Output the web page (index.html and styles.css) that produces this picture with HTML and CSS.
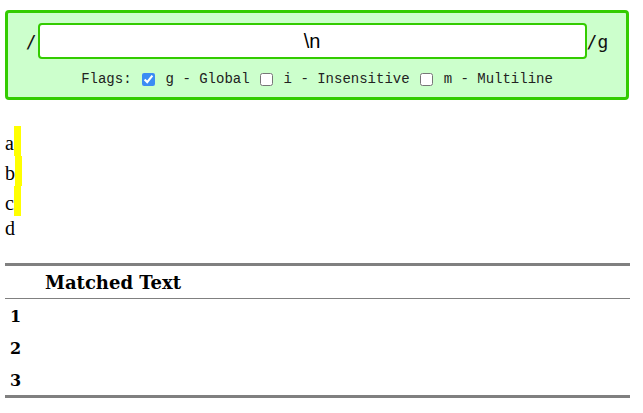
FILE: index.html
```html
<!DOCTYPE html>
<html>
<head>
<meta charset="utf-8">
<link rel="stylesheet" href="styles.css">
</head>
<body>
<div class="page">
  <div class="regex-box">
    <div class="pattern-row">
      <span class="delim delim-left">/</span>
      <input class="pattern" type="text" value="\n">
      <span class="delim delim-right">/g</span>
    </div>
    <div class="flags">
      <span class="flags-label">Flags:</span>
      <label class="flag"><input class="flag-box" type="checkbox" checked><span>g - Global</span></label>
      <label class="flag"><input class="flag-box" type="checkbox"><span>i - Insensitive</span></label>
      <label class="flag"><input class="flag-box" type="checkbox"><span>m - Multiline</span></label>
    </div>
  </div>

  <div class="test-text">
    <div class="line">a<mark class="nl"></mark></div>
    <div class="line">b<mark class="nl"></mark></div>
    <div class="line">c<mark class="nl"></mark></div>
    <div class="line">d</div>
  </div>

  <table class="matches">
    <thead>
      <tr><th class="idx-col"></th><th>Matched Text</th></tr>
    </thead>
    <tbody>
      <tr><td class="idx">1</td><td></td></tr>
      <tr><td class="idx">2</td><td></td></tr>
      <tr><td class="idx">3</td><td></td></tr>
    </tbody>
  </table>
</div>
</body>
</html>
```

FILE: styles.css
```css
html, body {
  margin: 0;
  padding: 0;
  background: #ffffff;
}

.page {
  width: 625px;
  padding: 10px 0 0 5px;
}

.regex-box {
  width: 624px;
  box-sizing: border-box;
  border: 3px solid #33cc00;
  border-radius: 4px;
  background: #ccffcc;
  padding: 10px 0 8px 0;
}

.pattern-row {
  display: flex;
  align-items: center;
  justify-content: center;
  height: 36px;
}

.delim {
  font-family: "DejaVu Sans Mono", monospace;
  font-size: 18px;
  color: #111;
}

.delim-left {
  margin-right: 1px;
}

.pattern {
  width: 549px;
  height: 36px;
  box-sizing: border-box;
  margin: 0;
  border: 2px solid #33cc00;
  border-radius: 4px;
  background: #ffffff;
  text-align: center;
  font-family: "Liberation Sans", Arial, sans-serif;
  font-size: 20px;
  color: #000;
  outline: none;
  padding: 0 4px;
}

.flags {
  display: flex;
  align-items: center;
  justify-content: center;
  height: 20px;
  margin-top: 10px;
  font-family: "Liberation Mono", "Courier New", monospace;
  font-size: 14px;
  color: #222;
}

.flag {
  display: flex;
  align-items: center;
}

.flag-box {
  width: 13px;
  height: 13px;
  margin: 0 11px 0 10px;
  accent-color: #3b8cf4;
}

.test-text {
  margin-top: 26px;
  font-family: "Liberation Serif", "Times New Roman", serif;
  font-size: 20px;
  color: #000;
}

.line {
  line-height: 24px;
}

.nl {
  display: inline-block;
  width: 7px;
  height: 30px;
  vertical-align: -6px;
  background: #ffff00;
}

.matches {
  margin-top: 23px;
  width: 625px;
  border-collapse: separate;
  border-spacing: 0;
  border-top: 3px solid #808080;
  border-bottom: 3px solid #808080;
  font-family: "DejaVu Serif", Georgia, serif;
  color: #000;
}

.matches th {
  height: 32px;
  padding: 1px 5px 0 5px;
  text-align: left;
  font-size: 18px;
  font-weight: bold;
  line-height: 31px;
  border-bottom: 1px solid #808080;
  box-sizing: border-box;
}

.matches .idx-col {
  width: 35px;
  box-sizing: border-box;
}

.matches td {
  height: 32px;
  padding: 0 5px;
  line-height: 32px;
  box-sizing: border-box;
}

.matches .idx {
  font-size: 16px;
  font-weight: bold;
  padding-top: 3px;
  line-height: 29px;
  font-variant-numeric: oldstyle-nums;
}
```
